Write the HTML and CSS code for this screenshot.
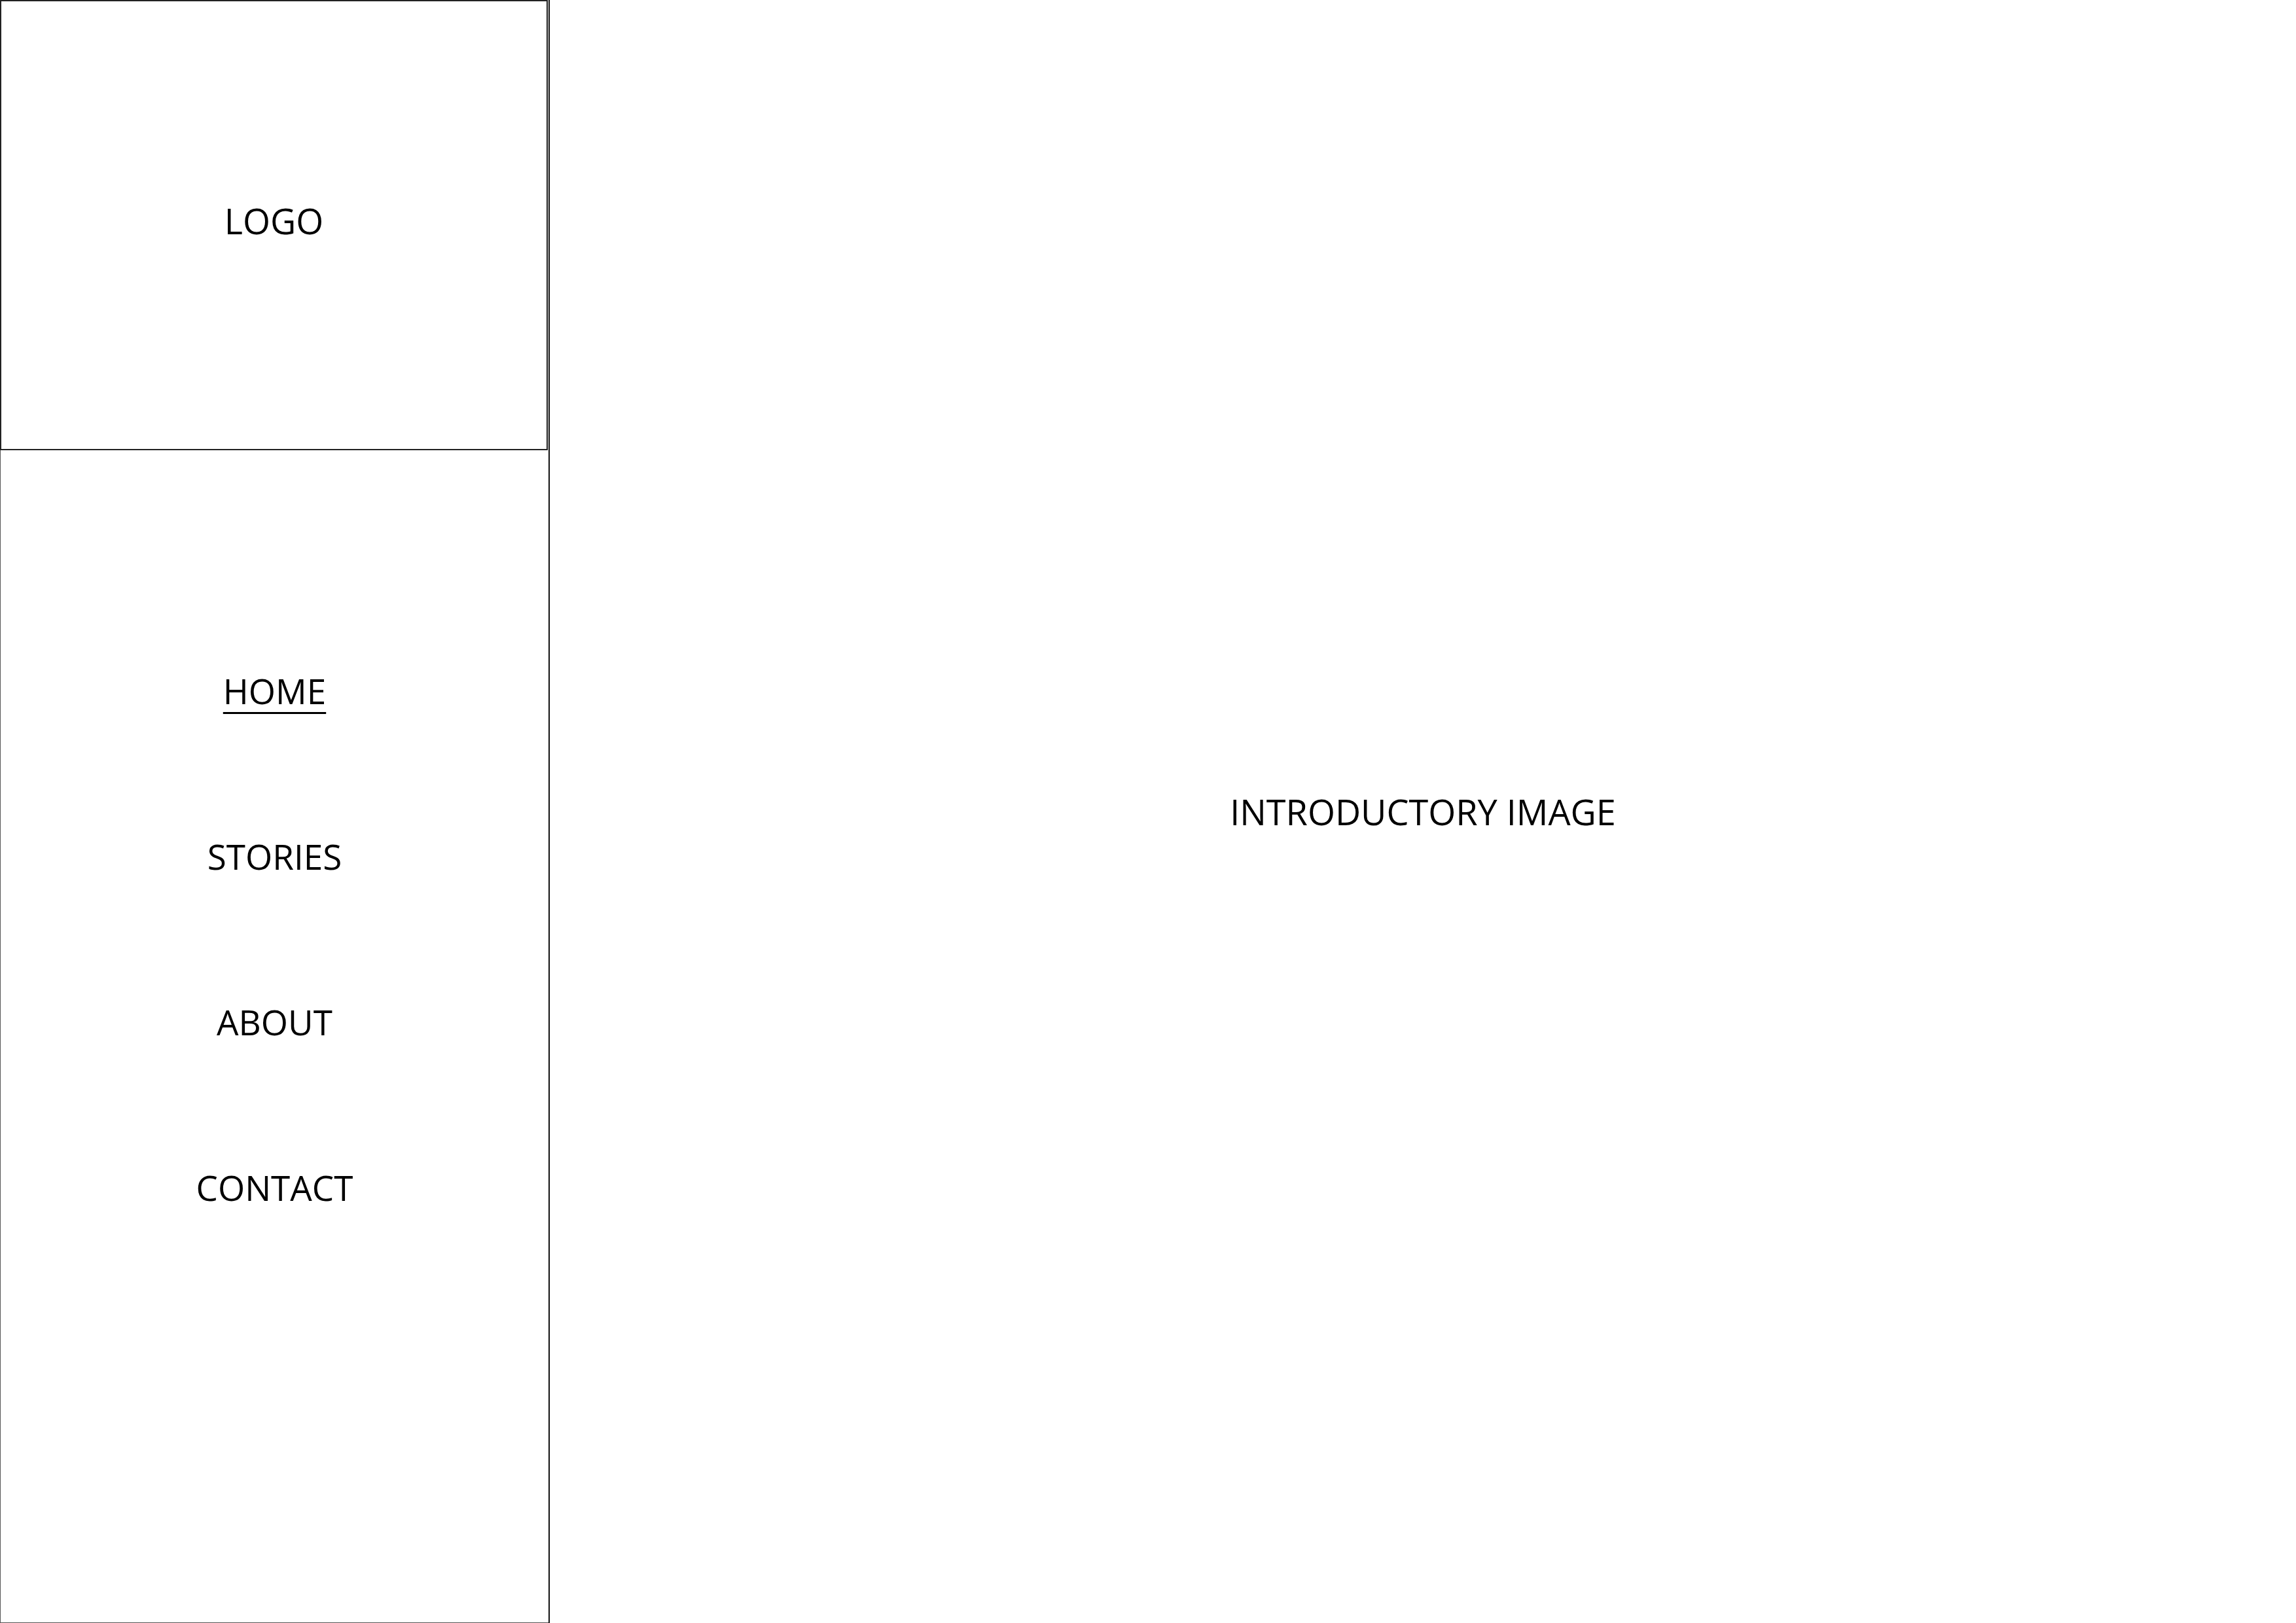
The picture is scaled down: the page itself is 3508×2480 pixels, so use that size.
FILE: index.html
```html
<!DOCTYPE html>
<html lang="en">
<head>
<meta charset="utf-8">
<title>Wireframe</title>
<link rel="stylesheet" href="styles.css">
</head>
<body>
<div class="page">
  <aside class="sidebar">
    <div class="logo-box"><span class="label">LOGO</span></div>
    <nav class="nav">
      <a class="nav-item active">HOME</a>
      <a class="nav-item">STORIES</a>
      <a class="nav-item">ABOUT</a>
      <a class="nav-item">CONTACT</a>
    </nav>
  </aside>
  <main class="main">
    <span class="label">INTRODUCTORY IMAGE</span>
  </main>
</div>
</body>
</html>
```

FILE: styles.css
```css
html, body {
  margin: 0;
  padding: 0;
  background: #fff;
}
body {
  font-family: "Open Sans", "Liberation Sans", sans-serif;
  color: #000;
}
.page {
  display: flex;
  width: 3508px;
  height: 2480px;
}
.sidebar {
  width: 840px;
  box-sizing: border-box;
  border-right: 2px solid #111;
  display: flex;
  flex-direction: column;
}
.logo-box {
  width: 837px;
  height: 688px;
  box-sizing: border-box;
  border: 2px solid #222;
  padding-bottom: 14px;
  display: flex;
  align-items: center;
  justify-content: center;
  flex: none;
}
.label {
  font-size: 54px;
  line-height: 72px;
  font-weight: 500;
}
.nav {
  flex: 1;
  border-left: 1px solid #555;
  border-bottom: 1px solid #555;
  display: flex;
  flex-direction: column;
  align-items: center;
  padding-top: 332px;
  gap: 181px;
}
.nav-item {
  font-size: 53px;
  line-height: 72px;
  font-weight: 500;
  color: #000;
  text-decoration: none;
}
.nav-item.active {
  text-decoration: underline;
  text-decoration-thickness: 3px;
  text-underline-offset: 12px;
}
.main {
  flex: 1;
  display: flex;
  align-items: center;
  justify-content: center;
}
```
